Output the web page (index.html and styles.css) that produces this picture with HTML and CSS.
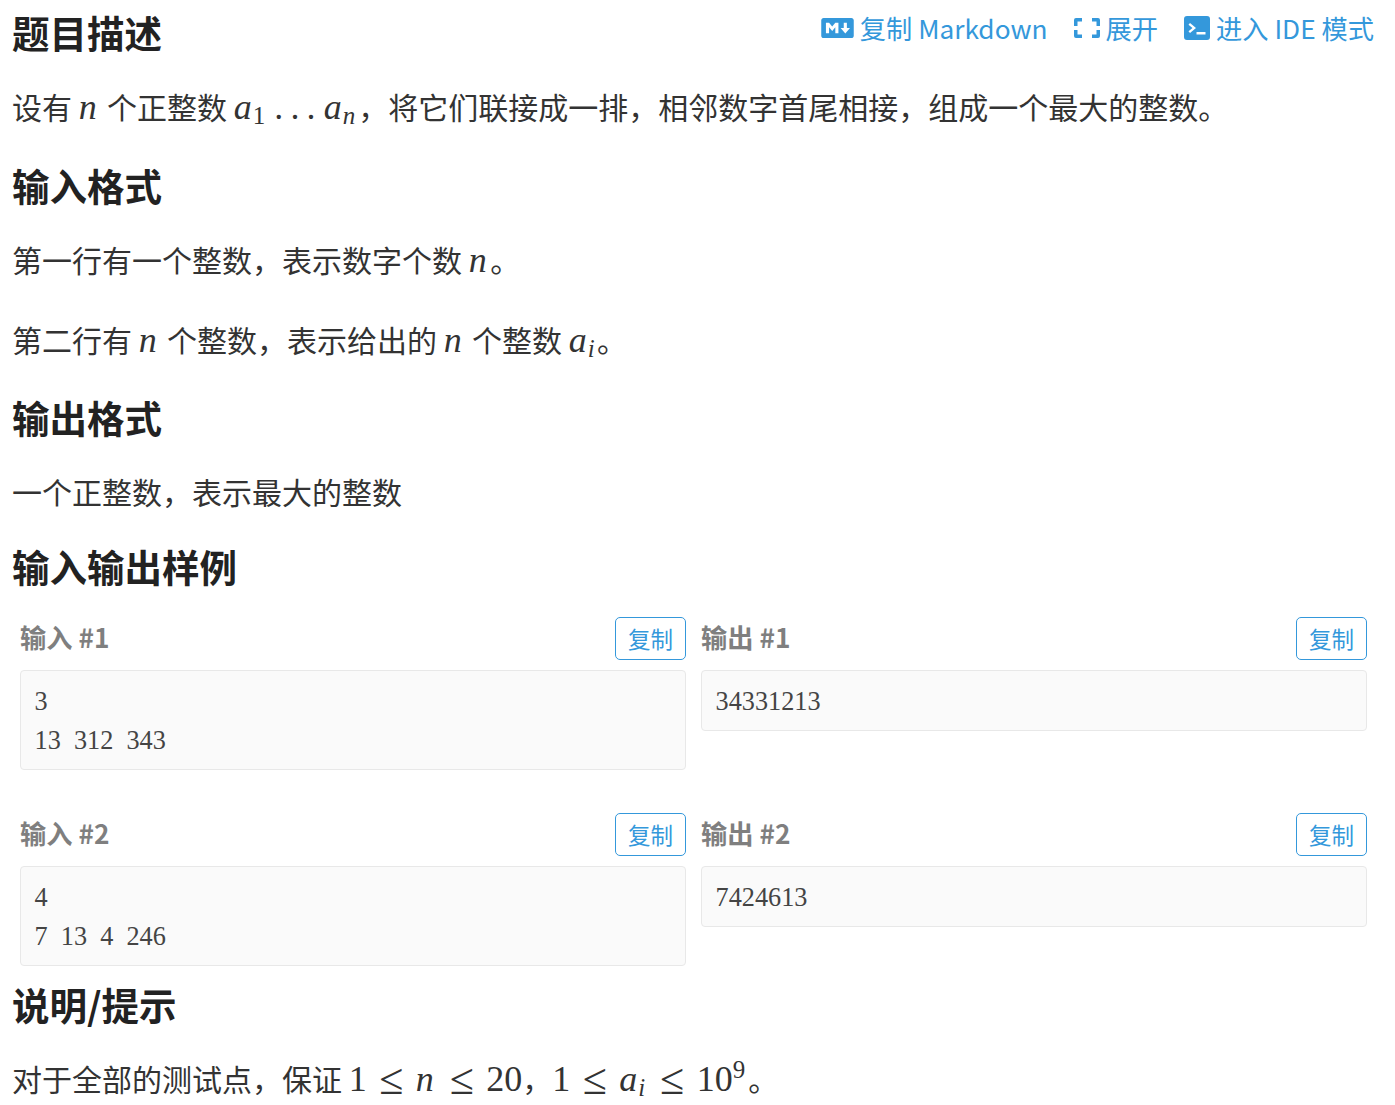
FILE: index.html
```html
<!DOCTYPE html>
<html lang="zh-CN">
<head>
<meta charset="utf-8">
<title>题目描述</title>
<link rel="stylesheet" href="styles.css">
</head>
<body>
<main class="problem">
  <header class="title-row">
    <h2 class="first">题目描述</h2>
    <nav class="actions">
      <a class="action"><svg class="ic ic-md" viewBox="0 0 640 512"><path d="M593.8 59.1H46.2C20.7 59.1 0 79.8 0 105.2v301.5c0 25.5 20.7 46.2 46.2 46.2h547.7c25.5 0 46.2-20.7 46.1-46.1V105.2c0-25.4-20.7-46.1-46.2-46.1zM338.5 360.6H277v-120l-61.5 76.9-61.5-76.9v120H92.300V151.4h61.5l61.5 76.9 61.5-76.9h61.5v209.2zm135.3 3.1L381.5 256H443V151.4h61.5V256H566z"/></svg>复制 Markdown</a>
      <a class="action"><svg class="ic ic-ex" viewBox="0 0 26 20"><path d="M2 0h6v3.500H3.500V8H0V2a2 2 0 0 1 2-2zM18 0h6a2 2 0 0 1 2 2v6h-3.500V3.500H18zM0 12h3.500v4.500H8V20H2a2 2 0 0 1-2-2zM22.500 12H26v6a2 2 0 0 1-2 2h-6v-3.500h4.500z"/></svg>展开</a>
      <a class="action"><svg class="ic ic-term" viewBox="0 0 26 24"><path fill-rule="evenodd" d="M3 0h20a3 3 0 0 1 3 3v18a3 3 0 0 1-3 3H3a3 3 0 0 1-3-3V3a3 3 0 0 1 3-3zM6 7L4.500 8.700 8.500 12l-4 3.300L6 17l6-5zM12.500 16v2.500h9V16z"/></svg>进入 IDE 模式</a>
    </nav>
  </header>
  <p class="math lead">设有 <span class="m"><i class="n">n</i></span> 个正整数 <span class="m"><i class="a">a</i><sub>1</sub><span class="dots">...</span><i class="a">a</i><sub><i class="sn">n</i></sub></span>，将它们联接成一排，相邻数字首尾相接，组成一个最大的整数。</p>
  <h2>输入格式</h2>
  <p class="math">第一行有一个整数，表示数字个数 <span class="m"><i class="n">n</i></span>。</p>
  <p class="math">第二行有 <span class="m"><i class="n">n</i></span> 个整数，表示给出的 <span class="m"><i class="n">n</i></span> 个整数 <span class="m"><i class="a">a</i><sub><i class="si">i</i></sub></span>。</p>
  <h2>输出格式</h2>
  <p class="plain">一个正整数，表示最大的整数</p>
  <h2>输入输出样例</h2>
  <section class="samples">
    <div class="sample">
      <div class="col">
        <div class="col-head"><h3>输入 #1</h3><button class="copy">复制</button></div>
        <pre>3
13  312  343</pre>
      </div>
      <div class="col">
        <div class="col-head"><h3>输出 #1</h3><button class="copy">复制</button></div>
        <pre>34331213</pre>
      </div>
    </div>
    <div class="sample">
      <div class="col">
        <div class="col-head"><h3>输入 #2</h3><button class="copy">复制</button></div>
        <pre>4
7  13  4  246</pre>
      </div>
      <div class="col">
        <div class="col-head"><h3>输出 #2</h3><button class="copy">复制</button></div>
        <pre>7424613</pre>
      </div>
    </div>
  </section>
  <h2 class="after-samples">说明/提示</h2>
  <p class="math">对于全部的测试点，保证 <span class="m">1<span class="rel">≤</span><i class="n">n</i><span class="rel">≤</span>20</span>，<span class="m">1<span class="rel">≤</span><i class="a">a</i><sub><i class="si">i</i></sub><span class="rel">≤</span>10<sup>9</sup></span>。</p>
</main>
</body>
</html>
```
FILE: styles.css
```css
html, body {
  margin: 0;
  padding: 0;
  background: #fff;
}
body {
  font-family: "Noto Sans CJK SC", "Noto Sans", sans-serif;
  font-size: 30px;
  color: #333;
}
.problem {
  padding: 0 13px 0 12px;
}
.title-row {
  display: flex;
  justify-content: space-between;
  align-items: flex-start;
  margin: 7px 0 26px;
}
h2 {
  font-size: 37.5px;
  line-height: 50px;
  font-weight: 700;
  color: #222;
  margin: 29px 0 26px;
}
h2.first {
  margin: 0;
}
p {
  margin: 0;
  white-space: nowrap;
}
p.plain {
  line-height: 47px;
  height: 44px;
}
p.math {
  line-height: 47px;
  height: 47px;
}
p.lead {
  height: 48px;
}
p + p {
  margin-top: 33px;
}
.actions {
  display: flex;
  gap: 26px;
  margin: 1px 8px 0 0;
}
.action {
  display: flex;
  align-items: center;
  font-size: 26.25px;
  line-height: 40px;
  color: #3498db;
}
.ic {
  fill: #3498db;
  flex: none;
}
.ic-md { width: 33px; height: 26px; margin-right: 6px; }
.ic-ex { width: 26px; height: 20px; margin-right: 6px; }
.ic-term { width: 26px; height: 24px; margin-right: 6px; }

.m {
  font-family: "Liberation Serif", serif;
  font-size: 36px;
  line-height: 0;
}
.n {
  font-style: italic;
  letter-spacing: 3.5px;
}
.a {
  font-style: italic;
  letter-spacing: 1px;
}
.m sub, .m sup {
  font-size: 25px;
  line-height: 0;
}
.m sub {
  vertical-align: -5px;
}
.m sup {
  vertical-align: 13px;
  letter-spacing: 3px;
}
.sn {
  letter-spacing: 3px;
}
.si {
  letter-spacing: 2.5px;
}
.dots {
  letter-spacing: 7.2px;
  margin: 0 1px 0 9px;
}
.rel {
  display: inline-block;
  width: 28px;
  margin: 0 10.5px;
  text-align: center;
  font-size: 44px;
  vertical-align: -3px;
}
.samples {
  margin: 0 15px 0 8px;
  display: flex;
  flex-direction: column;
  gap: 43px;
}
.sample {
  display: grid;
  grid-template-columns: 1fr 1fr;
  gap: 15px;
  align-items: start;
}
.col-head {
  display: flex;
  justify-content: space-between;
  align-items: flex-start;
  height: 43px;
  margin-bottom: 10px;
}
h3 {
  margin: 0;
  font-size: 26.25px;
  line-height: 40px;
  font-weight: 700;
  color: #7f7f7f;
}
.copy {
  width: 71px;
  height: 43px;
  padding: 0;
  border: 1px solid #3498db;
  border-radius: 5px;
  background: #fff;
  color: #3498db;
  font-family: inherit;
  font-size: 22.5px;
  line-height: 1;
}
pre {
  margin: 0;
  padding: 11px 13.5px 9px;
  border: 1px solid #e8e8e8;
  border-radius: 4px;
  background: #fafafa;
  font-family: "Liberation Serif", serif;
  font-size: 26.25px;
  line-height: 39px;
  color: #444;
}
h2.after-samples {
  margin: 13px 0 26px;
}
```
